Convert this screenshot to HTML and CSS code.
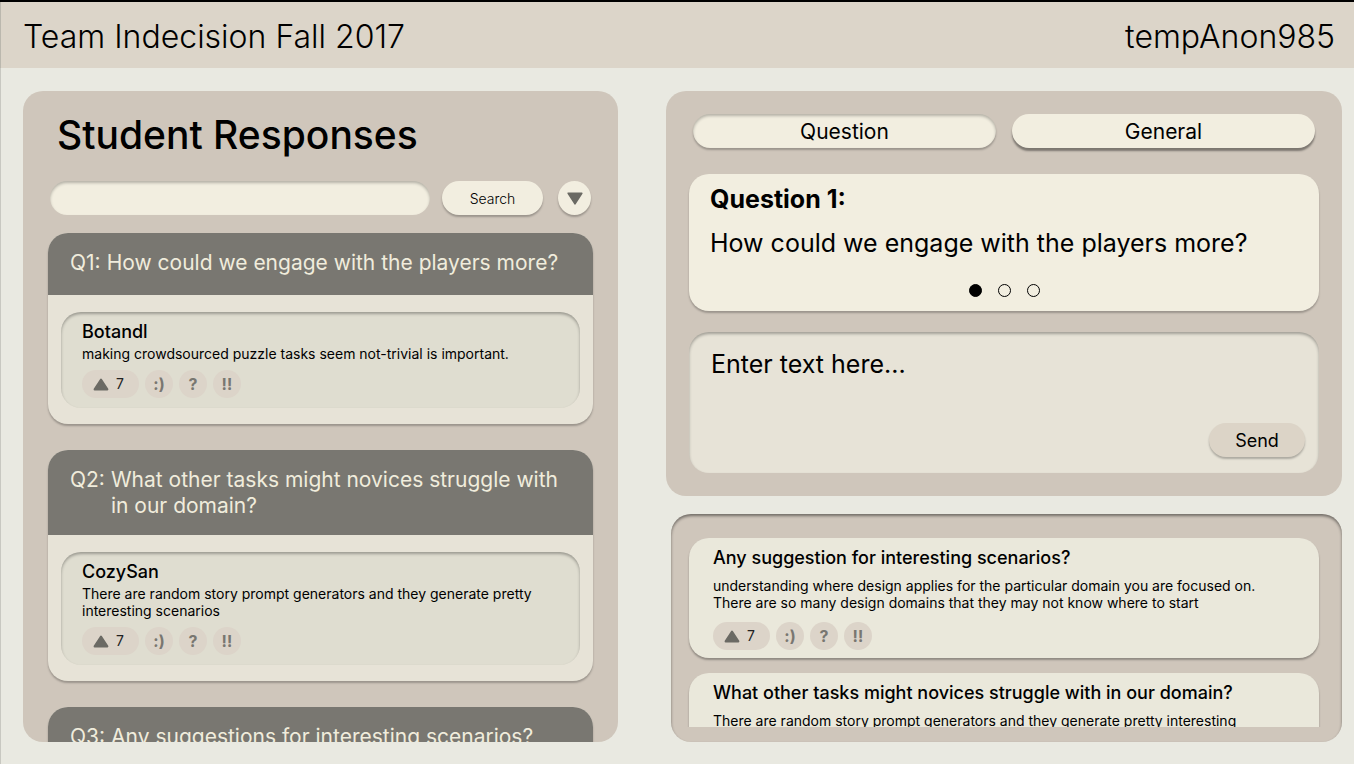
FILE: index.html
```html
<!DOCTYPE html>
<html lang="en">
<head>
<meta charset="utf-8">
<title>Team Indecision Fall 2017</title>
<link rel="stylesheet" href="styles.css">
</head>
<body>
<svg class="sprite" aria-hidden="true">
  <symbol id="up" viewBox="0 0 16 13"><path d="M8 1.6 14.4 11.4H1.6Z" fill="currentColor" stroke="currentColor" stroke-width="2" stroke-linejoin="round"/></symbol>
  <symbol id="down" viewBox="0 0 16 13"><path d="M1.2 1.2H14.8L8 11.8Z" fill="currentColor" stroke="currentColor" stroke-width="1.6" stroke-linejoin="round"/></symbol>
</svg>
<header class="topbar">
  <span class="team">Team Indecision Fall 2017</span>
  <span class="user">tempAnon985</span>
</header>
<main class="layout">
  <section class="panel responses">
    <h1 class="title">Student Responses</h1>
    <form class="search">
      <input class="search-input" type="search" aria-label="Search responses">
      <button class="search-button" type="button">Search</button>
      <button class="filter-button" type="button" aria-label="Filter"><svg class="triangle"><use href="#down"/></svg></button>
    </form>
    <div class="thread-list">
      <article class="thread">
        <h2 class="thread-head"><span>Q1:</span><span>How could we engage with the players more?</span></h2>
        <div class="thread-body">
          <div class="response">
            <h3 class="name">Botandl</h3>
            <p class="text">making crowdsourced puzzle tasks seem not-trivial is important.</p>
            <div class="reactions">
              <button class="chip vote" type="button"><svg class="triangle"><use href="#up"/></svg>7</button>
              <button class="chip" type="button">:)</button>
              <button class="chip" type="button">?</button>
              <button class="chip" type="button">‼</button>
            </div>
          </div>
        </div>
      </article>
      <article class="thread">
        <h2 class="thread-head"><span>Q2:</span><span>What other tasks might novices struggle with in our domain?</span></h2>
        <div class="thread-body">
          <div class="response">
            <h3 class="name">CozySan</h3>
            <p class="text">There are random story prompt generators and they generate pretty interesting scenarios</p>
            <div class="reactions">
              <button class="chip vote" type="button"><svg class="triangle"><use href="#up"/></svg>7</button>
              <button class="chip" type="button">:)</button>
              <button class="chip" type="button">?</button>
              <button class="chip" type="button">‼</button>
            </div>
          </div>
        </div>
      </article>
      <article class="thread">
        <h2 class="thread-head"><span>Q3:</span><span>Any suggestions for interesting scenarios?</span></h2>
      </article>
    </div>
  </section>
  <div class="side">
    <section class="panel ask">
      <div class="tabs">
        <button class="tab tab-active" type="button">Question</button>
        <button class="tab" type="button">General</button>
      </div>
      <article class="question">
        <h2 class="question-label">Question 1:</h2>
        <p class="question-text">How could we engage with the players more?</p>
        <div class="dots">
          <button class="dot dot-active" type="button" aria-label="Question 1"></button>
          <button class="dot" type="button" aria-label="Question 2"></button>
          <button class="dot" type="button" aria-label="Question 3"></button>
        </div>
      </article>
      <form class="composer">
        <textarea class="composer-input" placeholder="Enter text here..." aria-label="Your response"></textarea>
        <button class="send" type="button">Send</button>
      </form>
    </section>
    <section class="panel feed">
      <div class="feed-list">
        <article class="post">
          <h3 class="name">Any suggestion for interesting scenarios?</h3>
          <p class="text">understanding where design applies for the particular domain you are focused on. There are so many design domains that they may not know where to start</p>
          <div class="reactions">
            <button class="chip vote" type="button"><svg class="triangle"><use href="#up"/></svg>7</button>
            <button class="chip" type="button">:)</button>
            <button class="chip" type="button">?</button>
            <button class="chip" type="button">‼</button>
          </div>
        </article>
        <article class="post">
          <h3 class="name">What other tasks might novices struggle with in our domain?</h3>
          <p class="text">There are random story prompt generators and they generate pretty interesting scenarios</p>
        </article>
      </div>
    </section>
  </div>
</main>
</body>
</html>
```
FILE: styles.css
```css
* { box-sizing: border-box; }
body {
  margin: 0;
  height: 100vh;
  display: flex;
  flex-direction: column;
  overflow: hidden;
  background: #e9e9e1;
  border-top: 2px solid #000;
  font-family: Inter, "Liberation Sans", sans-serif;
  color: #000;
}
h1, h2, h3, p { margin: 0; }
button, input, textarea { font: inherit; color: inherit; border: 0; padding: 0; }
button { cursor: pointer; }
.sprite { display: none; }
.triangle { width: 16px; height: 13px; color: #6b6a64; flex: none; }

.topbar {
  display: flex;
  justify-content: space-between;
  align-items: center;
  padding: 15px 19px 11px 22px;
  background: #dcd5c9;
  border-left: 1px solid #bbb8ae;
  font-size: 32px;
  line-height: 40px;
  font-weight: 300;
}
.layout {
  flex: 1;
  min-height: 0;
  display: grid;
  grid-template-columns: 595fr 676fr;
  gap: 48px;
  padding: 23px 12px 22px 22px;
  border-left: 1px solid #c8c8c1;
}
.panel { background: #cfc6bb; border-radius: 20px; }

.responses {
  display: flex;
  flex-direction: column;
  min-height: 0;
  padding: 20px 25px 0;
  overflow: hidden;
}
.title { padding-left: 9px; font-size: 39px; line-height: 48px; font-weight: 500; }
.search { display: flex; padding: 22px 2px 18px; }
.search-input {
  flex: 1;
  min-width: 0;
  height: 34px;
  padding: 0 16px;
  border-radius: 17px;
  background: #f2eee0;
  box-shadow: inset 0 2px 3px rgba(0, 0, 0, .25);
}
.search-button, .filter-button {
  height: 34px;
  background: #f2eee0;
  box-shadow: 0 2px 2px rgba(0, 0, 0, .25);
}
.search-button { width: 101px; margin: 0 15px 0 12px; border-radius: 17px; font-size: 14px; font-weight: 300; }
.filter-button { width: 33px; border-radius: 50%; display: grid; place-items: center; }

.thread-list {
  flex: 1;
  min-height: 0;
  display: flex;
  flex-direction: column;
  gap: 26px;
}
.thread { flex: none; border-radius: 20px; background: #e7e3d7; box-shadow: 0 2px 2px rgba(0, 0, 0, .25); }
.thread-head {
  display: flex;
  gap: 6px;
  min-height: 62px;
  padding: 17px 22px 16px;
  border-radius: 20px 20px 0 0;
  background: #797771;
  color: #f0ecdc;
  font-size: 21px;
  line-height: 26px;
  font-weight: 400;
}
.thread-body { padding: 17px 13px 16px; }
.response {
  padding: 10px 21px 10px;
  border-radius: 20px;
  background: #dfddd0;
  box-shadow: inset 0 2px 3px rgba(0, 0, 0, .3);
}
.name { font-size: 18px; line-height: 20px; font-weight: 500; }
.text { font-size: 14px; line-height: 17px; }
.response .text { margin-top: 3px; }
.reactions { display: flex; gap: 6px; margin-top: 8px; }
.chip {
  width: 28px;
  height: 28px;
  border-radius: 14px;
  background: #dcd4c9;
  color: #797771;
  font-size: 16px;
  line-height: 28px;
  font-weight: 700;
}
.vote {
  width: 57px;
  display: flex;
  align-items: center;
  padding-left: 11px;
  gap: 7px;
  color: #222;
  font-size: 14px;
  font-weight: 400;
}

.side { display: flex; flex-direction: column; min-height: 0; gap: 18px; }
.ask { padding: 23px; }
.tabs { display: grid; grid-template-columns: 1fr 1fr; gap: 16px; padding: 0 4px; }
.tab {
  height: 34px;
  border-radius: 17px;
  background: #f2eee0;
  box-shadow: 0 3px 2px rgba(0, 0, 0, .4);
  font-size: 21px;
}
.tab-active { box-shadow: inset 0 2px 3px rgba(0, 0, 0, .25), 0 2px 2px rgba(0, 0, 0, .25); }
.question {
  margin-top: 26px;
  padding: 10px 21px 14px;
  border-radius: 20px;
  background: #f2eee0;
  box-shadow: 0 2px 2px rgba(0, 0, 0, .25);
  font-size: 25px;
  line-height: 30px;
}
.question-label { font-size: 25px; font-weight: 700; }
.question-text { margin-top: 14px; }
.dots { display: flex; justify-content: center; gap: 16px; margin-top: 26px; }
.dot { width: 13px; height: 13px; border: 1px solid #000; border-radius: 50%; background: none; }
.dot-active { background: #000; }
.composer {
  display: flex;
  flex-direction: column;
  margin-top: 21px;
  padding: 17px 14px 16px 22px;
  border-radius: 20px;
  background: #e7e3d7;
  box-shadow: inset 0 2px 3px rgba(0, 0, 0, .3);
}
.composer-input {
  height: 60px;
  margin-bottom: 14px;
  background: none;
  resize: none;
  font-size: 25px;
  line-height: 30px;
}
.composer-input::placeholder { color: #000; opacity: 1; }
.send {
  align-self: flex-end;
  width: 96px;
  height: 34px;
  border-radius: 17px;
  background: #dcd4c7;
  box-shadow: 0 2px 2px rgba(0, 0, 0, .25);
  font-size: 18px;
}

.feed {
  flex: 1;
  min-height: 0;
  display: flex;
  margin-left: 5px;
  padding: 24px 5px 15px 0;
  box-shadow: inset 0 2px 3px rgba(0, 0, 0, .45);
}
.feed-list {
  flex: 1;
  display: flex;
  flex-direction: column;
  gap: 15px;
  padding: 0 18px;
  overflow: hidden;
}
.post {
  flex: none;
  padding: 10px 24px 8px;
  border-radius: 20px;
  background: #eae8db;
  box-shadow: 0 2px 2px rgba(0, 0, 0, .3);
}
.post .text { margin-top: 9px; }
.post .reactions { margin-top: 11px; }
```
